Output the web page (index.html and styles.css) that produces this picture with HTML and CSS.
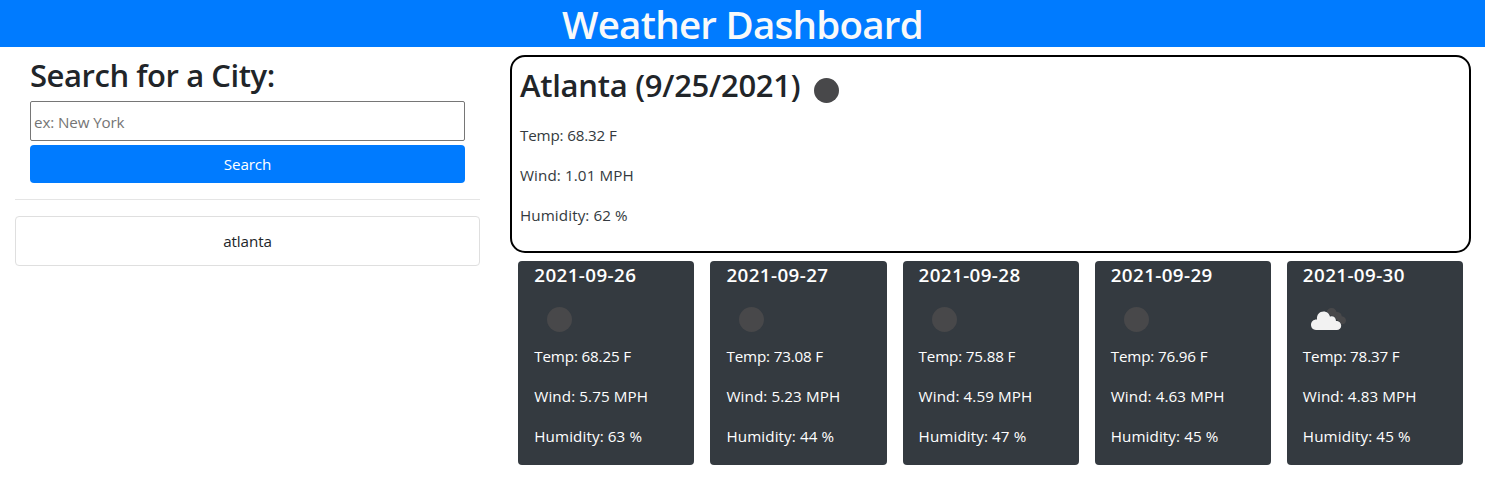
FILE: index.html
```
<!DOCTYPE html>
<html lang="en">
<head>
<meta charset="utf-8">
<title>Weather Dashboard</title>
<link rel="stylesheet" href="styles.css">
</head>
<body>
<header class="header"><h1 class="title">Weather Dashboard</h1></header>
<main class="layout">
  <aside class="sidebar">
    <form class="search">
      <h2 class="heading search-heading">Search for a City:</h2>
      <input class="search-input" type="text" placeholder="ex: New York">
      <button class="search-button" type="button">Search</button>
    </form>
    <hr class="divider">
    <ul class="history"><li class="history-item">atlanta</li></ul>
  </aside>
  <section class="content">
    <article class="current">
      <div class="current-top">
        <h2 class="heading current-heading">Atlanta (9/25/2021)</h2>
        <svg class="icon" viewBox="0 0 50 50"><circle cx="25.5" cy="25.5" r="12.5" fill="#48484a"/></svg>
      </div>
      <p class="stat light temp">Temp: 68.32 F</p>
      <p class="stat light wind">Wind: 1.01 MPH</p>
      <p class="stat light humidity">Humidity: 62 %</p>
    </article>
    <div class="forecast">
      <article class="card">
        <h5 class="date">2021-09-26</h5>
        <svg class="icon" viewBox="0 0 50 50"><circle cx="25.5" cy="24.5" r="12.5" fill="#48484a"/></svg>
        <p class="stat temp">Temp: 68.25 F</p><p class="stat wind">Wind: 5.75 MPH</p><p class="stat humidity">Humidity: 63 %</p>
      </article>
      <article class="card">
        <h5 class="date">2021-09-27</h5>
        <svg class="icon" viewBox="0 0 50 50"><circle cx="25.5" cy="24.5" r="12.5" fill="#48484a"/></svg>
        <p class="stat temp">Temp: 73.08 F</p><p class="stat wind">Wind: 5.23 MPH</p><p class="stat humidity">Humidity: 44 %</p>
      </article>
      <article class="card">
        <h5 class="date">2021-09-28</h5>
        <svg class="icon" viewBox="0 0 50 50"><circle cx="25.5" cy="24.5" r="12.5" fill="#48484a"/></svg>
        <p class="stat temp">Temp: 75.88 F</p><p class="stat wind">Wind: 4.59 MPH</p><p class="stat humidity">Humidity: 47 %</p>
      </article>
      <article class="card">
        <h5 class="date">2021-09-29</h5>
        <svg class="icon" viewBox="0 0 50 50"><circle cx="25.5" cy="24.5" r="12.5" fill="#48484a"/></svg>
        <p class="stat temp">Temp: 76.96 F</p><p class="stat wind">Wind: 4.63 MPH</p><p class="stat humidity">Humidity: 45 %</p>
      </article>
      <article class="card">
        <h5 class="date">2021-09-30</h5>
        <svg class="icon" viewBox="0 0 50 50">
          <path fill="#48484a" d="M23.500 17.500C24 14.500 26 13 28.500 13C31.500 13 33 15 33.500 17C36 16.800 38.500 18.200 38.800 21.200C41.500 21.500 43 23.400 43 25.500C43 28 41 29.500 38.500 29.500L34 25L30 22Z"/>
          <path fill="#f2f2f2" stroke="#343a40" stroke-width="1" paint-order="stroke" d="M13 35C10 35 8 32.800 8 29.800C8 26.500 10.500 24.300 14 24.500C13.500 19.500 16.500 16.400 20.500 16.400C24 16.400 26.500 18.600 27 21.700C30 20.500 33 22.500 33 26C36 26 38.200 28 38.200 30.700C38.200 33.300 36.300 35 33.800 35Z"/>
        </svg>
        <p class="stat temp">Temp: 78.37 F</p><p class="stat wind">Wind: 4.83 MPH</p><p class="stat humidity">Humidity: 45 %</p>
      </article>
    </div>
  </section>
</main>
</body>
</html>
```
FILE: styles.css
```
* { box-sizing: border-box; }
body { margin: 0; background: #fff; color: #212529; font: 400 15.2px/24px "Open Sans", sans-serif; }
h1, h2, h5, p, ul { margin: 0; }
.header { height: 47px; background: #007bff; color: #f8f9fa; text-align: center; }
.title { font-size: 38.5px; line-height: 49px; font-weight: 600; letter-spacing: -0.74px; }
.layout { display: grid; grid-template-columns: 495px 990px; }
.sidebar { padding: 9px 15px 0; }
.search { display: flex; flex-direction: column; padding: 0 15px; }
.heading { font-size: 31px; line-height: 38px; font-weight: 600; white-space: nowrap; }
.search-heading { height: 45px; letter-spacing: -0.44px; }
.search-input { height: 40px; padding: 3px 3px 1px; border: 1px solid #767676; border-radius: 2px; font: inherit; letter-spacing: -0.12px; }
.search-input::placeholder { color: #757575; }
.search-button { height: 38px; margin-top: 4px; padding: 0; border: 0; border-radius: 4px; background: #007bff; color: #fff; font: inherit; letter-spacing: -0.1px; }
.divider { height: 1px; margin: 16px 0; border: 0; background: #e5e5e5; }
.history { padding: 0; list-style: none; }
.history-item { height: 50px; padding: 12px 0; border: 1px solid #dfdfdf; border-radius: 4px; text-align: center; letter-spacing: -0.1px; }
.content { padding: 8px 14px 0 15px; }
.current { height: 198px; padding: 8px; border: 2px solid #000; border-radius: 15px; }
.current-top { display: flex; height: 58px; }
.current-heading { padding-top: 1px; width: 281px; letter-spacing: -0.26px; }
.icon { display: block; width: 50px; height: 50px; flex: none; }
.stat { height: 24px; margin-bottom: 16px; white-space: nowrap; }
.temp { letter-spacing: -0.16px; }
.wind, .humidity { letter-spacing: 0.1px; }
.light { color: #343a40; }
.forecast { display: grid; grid-template-columns: repeat(5, 1fr); gap: 16px; padding: 8px 8px 8px 8.3px; }
.card { height: 204px; padding: 2px 16px; border-radius: 4px; background: #343a40; color: #fff; }
.card .icon { margin-bottom: -1px; }
.date { height: 32px; font-size: 18.8px; line-height: 24px; font-weight: 600; letter-spacing: 0.4px; }
```
